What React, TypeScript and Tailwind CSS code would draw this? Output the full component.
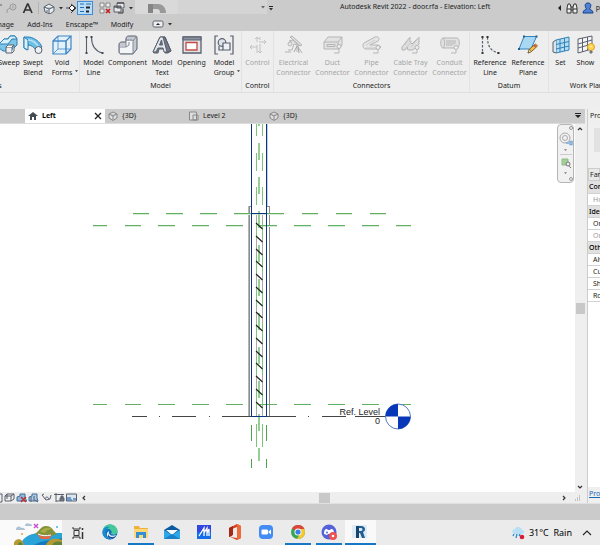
import { ReactNode } from "react"

interface IconProps {
    children: ReactNode
    className?: string
    box?: string
}

function Icon({ children, className = "size-5", box = "0 0 20 20" }: IconProps) {
    return (
        <svg viewBox={box} className={`shrink-0 ${className}`} fill="none" stroke="#59606e" strokeWidth="1" aria-hidden="true">
            {children}
        </svg>
    )
}

function Caret({ className = "w-1 h-1", fill = "#333" }: { className?: string; fill?: string }) {
    return (
        <Icon box="0 0 4 4" className={className}>
            <path d="M0 1h4L2 3.400z" fill={fill} stroke="none" />
        </Icon>
    )
}

const icons: Record<string, ReactNode> = {
    sweep: (
        <g stroke="#2b7fb5">
            <path d="M0 9l5-5h4l2-3h5l2 3v6l-4 4h-4l-2 2H4l-4-3z" fill="#7cc6e8" />
            <path d="M0 9l5-5h4l2-3h5l2 3h-5l-4 5z" fill="#d5f0fa" />
            <path d="M7 12h6v6H7z" fill="#eef1f4" stroke="#59606e" />
            <path d="M7 12l2-2h6l-2 2M15 10v6l-2 2" fill="#fff" stroke="#59606e" />
        </g>
    ),
    swept: (
        <g stroke="#2b7fb5">
            <path d="M1 2h5c6 1 11 5 13 10l-6 3C11 12 8 10 5 10l-1 5-3-2z" fill="#6fc0e6" />
            <path d="M1 2l4 3v10l-4-2z" fill="#d8f1fa" />
            <path d="M5 5c6 0 9 4 11 8" stroke="#b9e2f4" strokeWidth="1.500" />
            <circle cx="15.500" cy="15" r="3.500" fill="#eef1f4" stroke="#59606e" />
        </g>
    ),
    voidForms: (
        <g stroke="#3d86c6" strokeWidth="1.200">
            <path d="M1 6h13v13H1zM1 6l5-5h13l-5 5M19 1v13l-5 5" fill="#e3f1fa" />
            <path d="M6 1v13h13M6 14l-5 5M1 6h13v13" strokeWidth=".8" />
        </g>
    ),
    modelLine: (
        <g strokeWidth="1.100">
            <path d="M2.500 2v16M7.500 2c0 9 3 14 11 16" />
            <path d="M1.500 1h2v2h-2zM1.500 17h2v2h-2zM6.500 1h2v2h-2zM17.500 17h2v2h-2z" fill="#444a55" stroke="none" />
        </g>
    ),
    component: (
        <g>
            <path d="M8 4c0-2 1-3 3-3h6c2 0 2 1 2 2v11l-4 5H3c-1 0-2-1-2-2V10c0-2 1-3 3-3h4z" fill="#c5c9d1" />
            <path d="M8 6h7v12H2v-7h6z" fill="#f4f5f7" stroke="none" />
            <path d="M8 4v8H1M8 12l3-2V7M8 5h6c1 0 1 1 1 2v12M15 6l3-4" stroke="#858b98" />
        </g>
    ),
    modelText: (
        <g>
            <path d="M1 17L8 2h5l6 14-3 2h-3l-1-4H7l-1 4H2z" fill="#737986" />
            <path d="M1 17L8 2h3l4 15h-3l-1-4H6l-2 4zM7.500 10h3L9.500 5z" fill="#e3e6eb" />
            <path d="M11 2h2l6 14-4 1" />
        </g>
    ),
    opening: (
        <g>
            <path d="M1 2h18v16H1z" fill="#e2e4e8" strokeWidth="1.300" />
            <path d="M1 2h18v3H1z" fill="#8b919d" />
            <path d="M4 7.500h11v7.500H4z" fill="#fff" stroke="#c24a45" strokeWidth="1.300" />
        </g>
    ),
    modelGroup: (
        <g strokeWidth="1.200">
            <path d="M4 1H1v18h3M16 1h3v18h-3" />
            <circle cx="8" cy="7.500" r="3.800" fill="#dfe3ea" />
            <path d="M9 8h7v7H9z" fill="#eef1f5" />
            <path d="M5 11v4h4" />
        </g>
    ),
    control: (
        <g stroke="#c2c2c2" strokeWidth="1">
            <path d="M9 2v5M9 10v8M12 2v3M12 9v9M2 12h7M11 7h7" />
            <path d="M7 4l2-2 2 2M10 16l2 2 2-2M4 10l-2 2 2 2M16 5l2 2-2 2" />
        </g>
    ),
    electrical: (
        <g stroke="#b5b5b5">
            <path d="M6 2l2-1 10 9-2 1zM5 6l4-1 6 6" fill="#ddd" />
            <path d="M1 17h6M4 15h4l2-6 3 1v7M14 12l4 6M7 6L4 9" />
            <circle cx="6" cy="9" r="2" fill="#e8e8e8" />
            <path d="M13 11l-3 6M14 11l1 7" stroke="#a5a5a5" />
        </g>
    ),
    duct: (
        <g stroke="#b5b5b5">
            <path d="M1 7l4-5h14v8l-3 4H1z" fill="#e2e2e2" />
            <path d="M1 7h14v7M15 7l4-5M4 9.500h8v2H4z" />
            <circle cx="16" cy="11.500" r="2" fill="#eee" />
            <path d="M16 14v4h-5" />
        </g>
    ),
    pipe: (
        <g stroke="#b5b5b5">
            <path d="M2 8l11-6c4-1 5 2 3 4L8 10h8l3 2-2 2H4c-3 0-4-4-2-6z" fill="#e6e6e6" />
            <path d="M4 10l9-5M4 13h10" stroke="#ccc" />
            <circle cx="16" cy="12.500" r="2" fill="#eee" />
            <path d="M16 14.500V18h-5" />
        </g>
    ),
    cableTray: (
        <g stroke="#b5b5b5">
            <path d="M1 12l8-10v5l2 2 7-7v7l-6 6H7l-1-3-2 3H1z" fill="#dfdfdf" />
            <path d="M4 14l7-8M9 2L4 10M18 2l-8 10" stroke="#c8c8c8" />
            <circle cx="16" cy="12.500" r="2" fill="#eee" />
            <path d="M16 14.500V18h-5" />
        </g>
    ),
    conduit: (
        <g stroke="#b5b5b5">
            <path d="M3 3h14c3 0 3 10 0 10H3C0 13 0 3 3 3z" fill="#e2e2e2" />
            <path d="M3 3c2 0 2 10 0 10M7 5v6M9 5v6M11 5v6M13 5v5M15 5v4" />
            <circle cx="16" cy="12.500" r="2" fill="#eee" />
            <path d="M16 14.500V18h-5" />
        </g>
    ),
    refLine: (
        <g strokeWidth="1.200">
            <path d="M2.500 2v16M7.500 2c0 9 3 14 11 16" strokeDasharray="2.500 1.500" />
            <path d="M1.500 1h2v2h-2zM1.500 17h2v2h-2zM6.500 1h2v2h-2zM17.500 17h2v2h-2z" fill="#333" stroke="none" />
        </g>
    ),
    refPlane: (
        <g>
            <path d="M6 1.500h12.500L13 14H1z" fill="#a9d8f2" stroke="#3583b9" />
            <path d="M5 .5h2v2H5zM17.500.5h2v2h-2zM0 13h2v2H0z" fill="#225f90" stroke="none" />
            <path d="M10 18l1.500-4 6-5 2 2-6 5.500z" fill="#f5bf48" stroke="#8b651b" />
            <path d="M10 18l1.500-4 2 2.500z" fill="#fff1ce" stroke="#5f4d26" strokeWidth=".7" />
            <path d="M16 10l2 2" stroke="#c75d48" strokeWidth="2" />
        </g>
    ),
    setPlane: (
        <g stroke="#2f82b8">
            <path d="M5 5l13-3v13L5 18z" fill="#b5ddf2" />
            <path d="M9 4v13M13.500 3v13M5 9.500l13-3M5 14l13-3" />
            <path d="M5 5L2 7v10l3 1" fill="#d9e4ec" stroke="#59606e" />
        </g>
    ),
    showPlane: (
        <g>
            <path d="M2 4l14-3v13L2 18zM6.500 3v14M11.500 2v13M2 9l14-4M2 13l14-4" fill="#f4f4f4" />
            <circle cx="15" cy="12" r="3.500" fill="#ffd452" stroke="#dba62b" />
            <path d="M14 16h2v2h-2z" fill="#777" stroke="#777" />
            <path d="M14 11l1 1 1-1" stroke="#fff4ba" />
        </g>
    ),
}

interface Tool {
    label: string[]
    icon: string
    width: string
    arrow?: boolean
}

interface Panel {
    title: string
    width: string
    tools: Tool[]
    disabled?: boolean
    titleClass?: string
}

const panels: Panel[] = [
    {
        title: "Forms", width: "w-20", titleClass: "self-start -ml-[19px]",
        tools: [
            { label: ["Sweep"], icon: "sweep", width: "w-6" },
            { label: ["Swept", "Blend"], icon: "swept", width: "w-6" },
            { label: ["Void", "Forms"], icon: "voidForms", width: "w-[34px]", arrow: true },
        ],
    },
    {
        title: "Model", width: "w-[162px]",
        tools: [
            { label: ["Model", "Line"], icon: "modelLine", width: "w-[27px]" },
            { label: ["Component"], icon: "component", width: "w-[41px]" },
            { label: ["Model", "Text"], icon: "modelText", width: "w-7" },
            { label: ["Opening"], icon: "opening", width: "w-[31px]" },
            { label: ["Model", "Group"], icon: "modelGroup", width: "w-[34px]", arrow: true },
        ],
    },
    {
        title: "Control", width: "w-8", disabled: true,
        tools: [{ label: ["Control"], icon: "control", width: "w-[30px]" }],
    },
    {
        title: "Connectors", width: "w-[196px]", disabled: true,
        tools: [
            { label: ["Electrical", "Connector"], icon: "electrical", width: "w-[39px]" },
            { label: ["Duct", "Connector"], icon: "duct", width: "w-[39px]" },
            { label: ["Pipe", "Connector"], icon: "pipe", width: "w-[39px]" },
            { label: ["Cable Tray", "Connector"], icon: "cableTray", width: "w-[39px]" },
            { label: ["Conduit", "Connector"], icon: "conduit", width: "w-[39px]" },
        ],
    },
    {
        title: "Datum", width: "w-[79px]",
        tools: [
            { label: ["Reference", "Line"], icon: "refLine", width: "w-[38px]" },
            { label: ["Reference", "Plane"], icon: "refPlane", width: "w-[38px]" },
        ],
    },
    {
        title: "Work Plane", width: "w-20",
        tools: [
            { label: ["Set"], icon: "setPlane", width: "w-6" },
            { label: ["Show"], icon: "showPlane", width: "w-[26px]" },
            { label: ["Viewer"], icon: "opening", width: "w-[30px]" },
        ],
    },
]

function QuickAccess() {
    return (
        <header className="flex h-4 items-center bg-[#cbcbcb]">
            <div className="flex w-[135px] shrink-0 items-center">
                <button aria-label="Redo" className="w-1.5">
                    <Icon box="0 0 6 12" className="h-3 w-1.5"><path d="M0 3h2" /></Icon>
                </button>
                <button aria-label="Tag" className="w-3">
                    <Icon box="0 0 12 12" className="size-3">
                        <g stroke="#999"><circle cx="7" cy="5" r="3" /><path d="M7 3.500v3M4 6L1 8v3" /></g>
                    </Icon>
                </button>
                <button aria-label="Text" className="ml-1 w-3">
                    <Icon box="0 0 12 12" className="size-3">
                        <path d="M1.500 11L5.500 2h.5l4 9M3 8h6" stroke="#333" strokeWidth="1.700" />
                    </Icon>
                </button>
                <span className="mx-1 h-3 w-px bg-[#b3b3b3]" />
                <button aria-label="3D view" className="flex items-center gap-1">
                    <Icon box="0 0 12 12" className="size-3">
                        <path d="M1 5l5-3 5 3v4l-4 3-5-2zM1 5l5 2 5-2M6 7v5" fill="#e8edf2" /><path d="M4 8v2" />
                    </Icon>
                    <Caret />
                </button>
                <button aria-label="Section" className="ml-0.5 w-3">
                    <Icon box="0 0 12 12" className="size-3">
                        <path d="M7 3l3 3-3 3-3-3z" fill="#fff" stroke="#222" /><path d="M6 2l5 4-5 5M1 6h3" stroke="#444" />
                    </Icon>
                </button>
                <button aria-label="Thin lines" className="flex h-3.5 w-4 items-center justify-center border border-[#3b8edb] bg-[#b9dcf8]">
                    <Icon box="0 0 12 12" className="size-3">
                        <path d="M1 2h4M1 5.500h4M1 9.500h4M7 2h5" stroke="#276cab" /><path d="M7 5.500h4M7 9.500h3" stroke="#222" strokeWidth="2" />
                    </Icon>
                </button>
                <button aria-label="Close inactive views" className="ml-1.5">
                    <Icon box="0 0 12 12" className="size-3">
                        <path d="M1 1h4v4H1zM7 1h4v4H7zM1 7h4v4H1z" fill="#eee" stroke="#888" /><path d="M7 7l4 4M11 7l-4 4" stroke="#c61d22" strokeWidth="1.600" />
                    </Icon>
                </button>
                <button aria-label="Switch windows" className="ml-0.5 flex items-center gap-1">
                    <Icon box="0 0 12 12" className="size-3">
                        <path d="M4 1h7v5H4zM1 4h7v6H1z" fill="#e8e8e8" /><path d="M4 1h7M1 5h7M10 7v4H5" stroke="#333" />
                    </Icon>
                    <Caret />
                </button>
            </div>
            <div className="flex h-3.5 w-[43px] shrink-0 justify-center self-start bg-[#d9d9d9]">
                <svg viewBox="0 0 18 9" className="mt-1 h-[9px] w-[18px]" fill="#999" aria-hidden="true">
                    <path d="M0 0h10c5 0 8 4 8 9h-6c0-3-1-4-3-4H5v4H0z" /><path d="M0 0h5v9H0z" fill="#858585" />
                </svg>
            </div>
            <div className="flex h-3.5 w-[89px] shrink-0 items-center justify-end self-start bg-[#d4d4d4] pr-0.5"><Caret fill="#666" /></div>
            <button aria-label="Customize toolbar" className="ml-0.5 flex flex-col items-center">
                <span className="h-px w-1 bg-[#222]" /><Caret />
            </button>
            <h1 className="ml-[67px] flex-1 self-start whitespace-nowrap text-[7px] leading-[13px]">Autodesk Revit 2022 - door.rfa - Elevation: Left</h1>
            <div className="flex shrink-0 items-center">
                <Icon box="0 0 4 6" className="h-1.5 w-1"><path d="M3 0v6L0 3z" fill="#222" stroke="none" /></Icon>
                <button aria-label="Search" className="ml-1">
                    <Icon box="0 0 12 12" className="size-3">
                        <path d="M2 2h2l1 3v6H1V6zM8 2h2l1 4v5H7V5zM5 5h2M5 8h2M1 7h4M7 7h4" fill="#eee" stroke="#333" />
                    </Icon>
                </button>
                <button aria-label="Sign in" className="ml-1 flex items-center gap-0.5">
                    <Icon box="0 0 12 12" className="size-3">
                        <path d="M6 1c4 0 3 4 1.500 6 0 1 3 0 3.500 4H1c.5-4 3.500-3 3.500-4C3 5 2 1 6 1z" fill="#4d82d8" stroke="#173f87" />
                    </Icon>
                    p
                </button>
            </div>
        </header>
    )
}

function RibbonTabs() {
    return (
        <nav className="flex h-[15px] items-end bg-[#cbcbcb] pb-px">
            <button className="flex w-[14px] justify-end overflow-hidden">Manage</button>
            <button className="ml-3 w-7">Add-Ins</button>
            <button className="ml-2.5 w-9 whitespace-nowrap">Enscape™</button>
            <button className="ml-2 w-7">Modify</button>
            <button aria-label="Ribbon state" className="mb-0.5 ml-4 flex items-center gap-1">
                <Icon box="0 0 12 8" className="h-2 w-3">
                    <rect x="1" y="1" width="10" height="6" rx="1.500" fill="#eee" /><path d="M4 5h4L6 3z" fill="#222" stroke="none" />
                </Icon>
                <Caret />
            </button>
        </nav>
    )
}

function RibbonPanel({ panel }: { panel: Panel }) {
    return (
        <section className={`flex shrink-0 flex-col items-center overflow-hidden border-r border-[#e2e2e2] pt-1 ${panel.width}`}>
            <div className={`flex h-[46px] ${panel.titleClass ? "self-end" : ""}`}>
                {panel.tools.map((t) => (
                    <button key={t.icon + t.label[0]} disabled={panel.disabled}
                        className={`relative flex shrink-0 flex-col items-center leading-[10px] disabled:text-[#a5a5a5] ${t.width}`}>
                        <Icon className="mb-[3px] size-5">{icons[t.icon]}</Icon>
                        {t.label.map((line) => <span key={line} className="whitespace-nowrap">{line}</span>)}
                        {t.arrow && <Caret className="absolute right-px bottom-2 h-1 w-[3px]" />}
                    </button>
                ))}
            </div>
            <h2 className={`leading-[10px] whitespace-nowrap ${panel.titleClass ?? ""}`}>{panel.title}</h2>
        </section>
    )
}

function CubeIcon({ className = "size-2.5" }: { className?: string }) {
    return (
        <Icon box="0 0 10 10" className={className}>
            <path d="M1 3l4-2 4 2v4L5 9.500 1 7zM1 3l4 2 4-2M5 5v4" fill="#dedede" stroke="#888" />
        </Icon>
    )
}

function ViewTabs() {
    return (
        <div role="tablist" className="flex h-[15px] items-center border-b border-[#dcdcdc] bg-[#cbcbcb]">
            <div className="ml-[25px] flex h-3.5 w-20 items-center bg-white px-[3px]">
                <Icon box="0 0 10 10" className="size-2.5">
                    <path d="M0 5l5-4 5 4H8v4H2V5z" fill="#454b55" stroke="none" /><path d="M4 6h2v3H4z" fill="#fff" stroke="none" />
                </Icon>
                <button role="tab" aria-selected="true" className="ml-1 flex-1 text-left font-bold text-black">Left</button>
                <button aria-label="Close view">
                    <Icon box="0 0 8 8" className="size-2"><path d="M1 1l6 6M7 1L1 7" stroke="#222" strokeWidth="1.300" /></Icon>
                </button>
            </div>
            <button role="tab" className="ml-[3px] flex w-[81px] items-center gap-1"><CubeIcon />{"{3D}"}</button>
            <button role="tab" className="flex w-20 items-center gap-1">
                <Icon box="0 0 10 10" className="size-2.5">
                    <path d="M.5 1h7v8h-7zM4 4h5v5H4z" fill="#ddd" stroke="#888" />
                </Icon>
                Level 2
            </button>
            <button role="tab" className="flex items-center gap-1"><CubeIcon />{"{3D}"}</button>
            <button aria-label="All views" className="mr-1 ml-auto">
                <Icon box="0 0 6 6" className="size-1.5"><path d="M0 0h6v1H0zM0 2h6L3 5z" fill="#222" stroke="none" /></Icon>
            </button>
        </div>
    )
}

const upperDashes = [[133, 149], [166, 183], [200, 217], [234, 284], [302, 318], [336, 352], [370, 386]]
const lowerDashes = [[93, 107], [125, 141], [158, 175], [192, 209], [226, 243], [260, 277], [294, 311], [328, 345], [362, 379], [396, 411]]
const levelDashes = [[132, 147], [159, 160], [172, 196], [209, 210], [222, 296], [308, 309], [322, 346], [355, 386]]

function horizontal(dashes: number[][], y: number) {
    return dashes.map(([a, b]) => `M${a} ${y}.5H${b}`).join("")
}

// elevation of the door leaf with its reference planes
function Elevation() {
    const hatches = Array.from({ length: 15 }, (_, i) => 223 + Math.round(i * 12.75))
    const side = [124, 153, 187, 221, 255, 289, 323, 357, 391]
    const centre = [143, 177, 211, 245, 279, 313, 347, 381, 414]
    return (
        <svg className="absolute inset-0 size-full" fill="none" role="img" aria-label="Left elevation">
            <g transform="translate(0 -124)">
                <path d={horizontal(levelDashes, 416)} stroke="#444" />
                <path d="M249.500 206v210M269.500 206v210M248 206.500h4M267 206.500h3" stroke="#8c8c8c" />
                <path d="M248.500 206v210" stroke="#b5b5b5" />
                <path d="M256.500 214v202M262.500 214v202" stroke="#aaa" />
                <path d={horizontal(upperDashes, 213) + horizontal(lowerDashes, 225) + horizontal(lowerDashes, 404)} stroke="#62b062" />
                <path d={horizontal(upperDashes, 214) + horizontal(lowerDashes, 226)} stroke="#d5ebd5" />
                <path d={side.map((y) => `M256.500 ${y}v${y === 124 ? 12 : 18}M262.500 ${y}v${y === 124 ? 12 : 18}`).join("")} stroke="#7cc47c" />
                <path d={"M259 124v2" + centre.map((y) => `M259 ${y}v17`).join("")} stroke="#96cf96" strokeWidth="2" />
                <path d="M256.500 424v23M262.500 424v23" stroke="#7cc47c" />
                <path d="M259 448v13" stroke="#96cf96" strokeWidth="2" />
                <path d="M251.500 425v16M266.500 425v16M251.500 459v9M266.500 459v9" stroke="#4fa34f" />
                <path d="M251.500 124v292M266.500 124v292M251 213.500h16M251 416.500h16" stroke="#0b3484" />
                <path d="M267.500 124v82" stroke="#c3cde0" />
                <path d={hatches.map((y) => `M256 ${y}l6.500 6`).join("")} stroke="#222" strokeWidth="1.200" />
                <circle cx="398" cy="416.500" r="12.500" fill="#fff" stroke="#5279c9" />
                <path d="M398 416.500V404a12.500 12.500 0 0 0-12.500 12.500h25A12.500 12.500 0 0 1 398 429z" fill="#0838b7" />
                <text x="380" y="415" textAnchor="end" fontSize="9" fill="#222" className="font-['Liberation_Sans',Arial,sans-serif]">Ref. Level</text>
                <text x="380" y="424" textAnchor="end" fontSize="9" fill="#222" className="font-['Liberation_Sans',Arial,sans-serif]">0</text>
            </g>
        </svg>
    )
}

function NavigationBar() {
    return (
        <div className="absolute top-0 right-px flex h-[59px] w-[17px] flex-col items-center justify-between rounded-sm border border-[#b5b5b5] bg-[#f1f1f1] py-px">
            <span className="size-1 self-end rounded-full border border-[#999]" />
            <button aria-label="Steering wheel" className="flex flex-col items-center gap-0.5">
                <Icon box="0 0 14 14" className="size-3.5">
                    <circle cx="6" cy="6" r="5" stroke="#aaa" /><circle cx="6" cy="6" r="2.500" stroke="#aaa" /><path d="M7 11h3M11 9.500h2v3h-2z" stroke="#7cabd8" strokeWidth="1.500" />
                </Icon>
                <Caret className="h-1 w-[3px]" fill="#777" />
            </button>
            <span className="h-px w-3 bg-[#ccc]" />
            <button aria-label="Zoom region" className="flex flex-col items-center gap-0.5">
                <Icon box="0 0 12 12" className="size-3">
                    <path d="M2 2h6v6H2z" fill="#a4cf99" stroke="#8dbb86" /><circle cx="8" cy="7" r="2" fill="#eee" stroke="#777" /><path d="M9 9l2 2" stroke="#777" />
                </Icon>
                <Caret className="h-1 w-[3px]" fill="#777" />
            </button>
            <span className="size-1 self-end rounded-full border border-[#999]" />
        </div>
    )
}

function Chevron({ d }: { d: string }) {
    return <Icon box="0 0 6 6" className="size-1.5"><path d={d} stroke="#333" strokeWidth="1.200" /></Icon>
}

function ViewControls() {
    return (
        <div className="flex h-[11px] items-center bg-[#eee] pr-1">
            <button aria-label="Detail level" className="w-1"><Icon box="0 0 4 10" className="h-2.5 w-1"><path d="M0 1h2v8H0" /></Icon></button>
            <button aria-label="Visual style">
                <Icon box="0 0 11 11" className="size-[11px]"><path d="M1 4h6v5H1zM1 4l2-2h7L7 4M10 2v5L7 9M3 2v5" fill="#eee" /></Icon>
            </button>
            <button aria-label="Shadows off" className="ml-px">
                <Icon box="0 0 11 11" className="size-[11px]"><path d="M1 9V5l3-1V2h5v4l2 3z" fill="#8eb7dc" stroke="#456f99" /><path d="M5 5l5 5M10 5l-5 5" stroke="#bd2e34" strokeWidth="1.500" /></Icon>
            </button>
            <button aria-label="Crop view" className="ml-px">
                <Icon box="0 0 11 11" className="size-[11px]"><path d="M1 9V5l3-1V2h5v4l1 3z" fill="#a9c9e5" stroke="#456f99" /><path d="M3 5v5M6 4v5M7 8l3 2" /></Icon>
            </button>
            <button aria-label="Temporary hide" className="ml-0.5">
                <Icon box="0 0 11 11" className="size-[11px]"><path d="M1 3l4 5 4-1 1-4M1 3l2-1M4 7c0-2 3-3 4 0" /></Icon>
            </button>
            <button aria-label="Reveal hidden elements" className="ml-0.5">
                <Icon box="0 0 11 11" className="size-[11px]"><path d="M0 2.500h10M2 1v9M2 9h4" /><path d="M6 6h4v3H6zM7 6V4h2v2" fill="#777" /></Icon>
            </button>
            <button aria-label="Preview visibility" className="ml-px">
                <Icon box="0 0 11 11" className="size-[11px]"><path d="M.5 2h10v7H.5z" fill="#dce5ed" /><path d="M1 8h5M1 6h4M7 7h3" stroke="#4d83bc" strokeWidth="1.500" /></Icon>
            </button>
            <button aria-label="Scroll left" className="ml-1"><Chevron d="M4 1L2 3l2 2" /></button>
            <div className="flex h-full flex-1 items-center justify-center"><span className="h-2.5 w-[11px] bg-[#c8c8c8]" /></div>
            <button aria-label="Scroll right"><Chevron d="M2 1l2 2-2 2" /></button>
            <Icon box="0 0 6 6" className="ml-2 size-1.5"><path d="M4 1h1M2 3h1M4 3h1M0 5h1M2 5h1M4 5h1" stroke="#999" /></Icon>
        </div>
    )
}

const properties = [
    { name: "Constraints", group: true },
    { name: "Host", muted: true },
    { name: "Identity Data", group: true },
    { name: "OmniClass Number" },
    { name: "OmniClass Title", muted: true },
    { name: "Other", group: true },
    { name: "Always vertical" },
    { name: "Cut with Voids" },
    { name: "Shared" },
    { name: "Room Calculation" },
]

function Properties() {
    return (
        <aside className="flex w-3 shrink-0 flex-col overflow-hidden bg-white whitespace-nowrap">
            <h2 className="h-[15px] bg-[#efefef] pl-0.5 leading-[14px]">Properties</h2>
            <div className="h-[44px] bg-[#f0f0f0] pt-1 pl-1.5"><div className="h-6 w-8 bg-[#e2e2e2]" /></div>
            <div className="h-[13px] border border-[#ccc] bg-[#e9e9e9] pl-px leading-[11px]">Family: Doors</div>
            <table className="w-24 table-fixed border-collapse">
                <tbody>
                    {properties.map((p) => (
                        <tr key={p.name} className={`h-3 border-b border-[#d2d2d2] ${p.group ? "bg-[#e1e1e1]" : ""}`}>
                            <th scope="row" className={`p-0 text-left leading-[11px] ${p.group ? "pl-px font-medium text-black" : "pl-[5px] font-normal"} ${p.muted ? "text-[#999]" : ""}`}>{p.name}</th>
                        </tr>
                    ))}
                </tbody>
            </table>
            <div className="mt-auto h-4 bg-[#efefef] pl-px leading-[13px]">
                <a href="#help" className="text-[#1768b8] underline">Properties help</a>
            </div>
        </aside>
    )
}

const apps: { name: string; running?: boolean; active?: boolean; art: ReactNode }[] = [
    {
        name: "Edge",
        art: <><circle cx="8" cy="8" r="7.500" fill="#176ebf" /><path d="M.5 8C1 2 5 .5 8 .5c5 0 8 4 7.500 7-.5 4-5 3.500-6.500 2.500 2-3-1-5-3-5C3 5 1 6 .5 8z" fill="#45c99a" /><path d="M.5 8C1 4 4 2 8 3c-3 1-5 4-4 8 1 2 3 4 5 4.500C4 16 0 12 .5 8z" fill="#168bd0" /><path d="M7 7c-1 4 3 6 7 4-2 4-6 4-8 2S5 8 7 7z" fill="#f0f5f8" /><path d="M6 9c0 4 4 5 8 3-2 3-6 3-8 1z" fill="#124e9c" /></>,
    },
    {
        name: "File Explorer", running: true,
        art: <><path d="M1 2h5l1 2h8v10H1z" fill="#edb33e" /><path d="M1 5h14v9H1z" fill="#ffd875" /><path d="M3 8h10v6h-3v-3H6v3H3z" fill="#3490d6" /></>,
    },
    {
        name: "Mail",
        art: <><path d="M0 6l8-5 8 5v9H0z" fill="#0b5ba2" /><path d="M2 6h12l-6 5z" fill="#f5f8fb" /><path d="M0 6l8 5 8-5v9H0z" fill="#2da7e8" /><path d="M0 15l8-5 8 5z" fill="#1781ca" /></>,
    },
    {
        name: "Media",
        art: <><path d="M1 1h14v14H1z" fill="#3147e0" /><path d="M1 8h14v7H1z" fill="#146de9" /><path d="M3 12l5-8v8M8 9l3-5v8M11 9l2-4v7" fill="none" stroke="#fff" strokeWidth="1.300" /></>,
    },
    {
        name: "Office",
        art: <><path d="M2 4l8-4 4 2v12l-4 2-7-3 7 1V3L5 5v7l-3 1z" fill="#d8441f" /><path d="M10 0l4 2v12l-4 2z" fill="#ee6a3b" /><path d="M2 4l4-2v9l-4 2z" fill="#a52917" /></>,
    },
    {
        name: "Zoom",
        art: <><rect x="1" y="1" width="14" height="14" rx="4" fill="#438bf5" /><rect x="3.500" y="5.500" width="6.500" height="5" rx="1" fill="#fff" /><path d="M10.500 7.500l2.500-2v5l-2.500-2z" fill="#fff" /></>,
    },
    {
        name: "Chrome", running: true,
        art: <><circle cx="8" cy="8" r="7" fill="#38a552" /><path d="M8 8L2 4.500A7 7 0 0 1 14.500 5H8z" fill="#dd4639" /><path d="M8 8h7A7 7 0 0 1 7 15l4-7-.5-3h4l.5 3z" fill="#f7c72e" /><circle cx="8" cy="8" r="3.500" fill="#fff" /><circle cx="8" cy="8" r="2.600" fill="#377fe6" /></>,
    },
    {
        name: "Discord", running: true,
        art: <><circle cx="8" cy="8" r="7.500" fill="#5462d9" /><path d="M3 10c0-4 1-5 3-5l1 1h2l1-1c2 0 3 1 3 5l-3 1-1-1H7l-1 1z" fill="#fff" /><circle cx="6" cy="8.500" r="1" fill="#5462d9" /><circle cx="12" cy="12" r="4" fill="#ef5150" /><circle cx="12" cy="12" r="1.300" fill="#fff" /></>,
    },
    {
        name: "Revit", running: true, active: true,
        art: <><path d="M0 1h15v13H0z" fill="#dcebf6" /><path d="M4 2h5c5 0 5 5 2 6l2 6h-3L8 9H7v5H4zM7 4v3h2c2 0 2-3 0-3z" fill="#205f92" fillRule="evenodd" /><path d="M4 2h3v12H4z" fill="#174466" /></>,
    },
]

function Taskbar() {
    return (
        <footer className="flex h-[25px] shrink-0 items-stretch overflow-hidden bg-[#ebebeb] text-black">
            <button aria-label="News and interests" className="w-[62px] shrink-0 bg-[#fafafa]">
                <svg viewBox="0 0 62 25" className="h-[25px] w-[62px]" aria-hidden="true">
                    <path d="M20 25c4-10 14-13 27-12h15v12z" fill="#2aa4d6" />
                    <path d="M34 25c8-5 15-4 28-7v7z" fill="#1479be" />
                    <path d="M35 14c4-3 6-8 11-8 6 0 7 5 11 8-6 3-16 3-22 0z" fill="#81923a" />
                    <path d="M40 12c4-5 8-5 13-3-4 0-6 1-8 4z" fill="#a9ac42" />
                    <path d="M14 25c-1-6 8-9 10 0zM46 25c3-7 10-7 16-5v5z" fill="#b59a32" />
                    <path d="M18 25c0-3 3-5 5 0zM52 25c2-4 6-4 10-3v3z" fill="#63833b" />
                    <path d="M37 14c5 3 9 3 15 1l-3 4h-8z" fill="#e96541" /><path d="M38 14c4 2 8 2 13 1" stroke="#fff" fill="none" />
                    <path d="M16 9c1-3 4-3 5-1 3-1 4 1 4 2h-9zM25 5c1-2 3-2 4-1 2-1 3 1 3 2h-7z" fill="#adc3d2" />
                    <path d="M34 4l4 4M38 4l-4 4" stroke="#cd52c9" strokeWidth="1.500" />
                    <circle cx="22" cy="14" r="1" fill="#ef9d37" /><circle cx="57" cy="7" r="1" fill="#42b5df" />
                </svg>
            </button>
            <button aria-label="Task view" className="flex w-8 shrink-0 items-center justify-center">
                <Icon box="0 0 12 12" className="size-3"><path d="M2 3.500h5v5H2zM1 0v2h7V0M1 12v-2h7v2" stroke="#333" /><path d="M10.500 1v2M10.500 5v7" stroke="#333" strokeWidth="1.500" /></Icon>
            </button>
            <div className="flex w-[282px] shrink-0">
                {apps.map((app) => (
                    <button key={app.name} aria-label={app.name}
                        className={`flex flex-1 flex-col items-center justify-between pt-1 ${app.active ? "bg-[#f9f9f9]" : ""}`}>
                        <svg viewBox="0 0 16 16" className="size-4" aria-hidden="true">{app.art}</svg>
                        {app.running && <span className={`h-0.5 bg-[#1778c8] ${app.active ? "w-full" : "w-[26px]"}`} />}
                    </button>
                ))}
            </div>
            <div className="ml-auto flex shrink-0 items-center text-[9px]">
                <button className="flex items-center gap-1">
                    <Icon box="0 0 14 14" className="size-3.5">
                        <path d="M2 7c-2-3 1-4 2-4 1-3 6-3 7 1 3 0 3 4 0 4H3z" fill="#b8dff5" stroke="none" />
                        <path d="M3 8l-1 2M6 8l-1 4M9 8l-1 2" stroke="#278bd1" strokeWidth="1.300" /><circle cx="11" cy="11" r="2.300" fill="#d51e36" stroke="none" />
                    </Icon>
                    <span>31°C&nbsp; Rain</span>
                </button>
                <button aria-label="Hidden icons" className="mr-2 ml-2.5">
                    <Icon box="0 0 10 8" className="h-2 w-2.5"><path d="M1 6l4-4 4 4" stroke="#222" strokeWidth="1.100" /></Icon>
                </button>
            </div>
        </footer>
    )
}

export default function App() {
    return (
        <div className="flex min-h-screen flex-col overflow-hidden bg-[#cbcbcb] font-['Noto_Sans','Open_Sans',sans-serif] text-[7px] text-[#222]">
            <QuickAccess />
            <RibbonTabs />
            <div className="flex h-[62px] shrink-0 overflow-hidden border-b border-[#dedede] bg-[#eee]">
                {panels.map((p) => <RibbonPanel key={p.title} panel={p} />)}
            </div>
            <div className="h-4 shrink-0 bg-[#eee]" />
            <main className="flex flex-1">
                <div className="flex min-w-0 flex-1 flex-col">
                    <ViewTabs />
                    <div className="flex flex-1">
                        <div className="relative min-w-0 flex-1 overflow-hidden bg-white">
                            <Elevation />
                            <NavigationBar />
                        </div>
                        <div className="flex w-[10px] flex-col items-center bg-[#efefef] py-0.5">
                            <button aria-label="Scroll up"><Chevron d="M1 4l2-2 2 2" /></button>
                            <div className="flex flex-1 items-center"><span className="h-[11px] w-[9px] bg-[#c8c8c8]" /></div>
                            <button aria-label="Scroll down"><Chevron d="M1 2l2 2 2-2" /></button>
                        </div>
                    </div>
                    <ViewControls />
                </div>
                <div className="w-[3px] border-r border-[#ccc] bg-[#eee]" />
                <Properties />
            </main>
            <div className="h-[17px] shrink-0 border-t border-[#e0e0e0] bg-[#cbcbcb]" />
            <Taskbar />
        </div>
    )
}
